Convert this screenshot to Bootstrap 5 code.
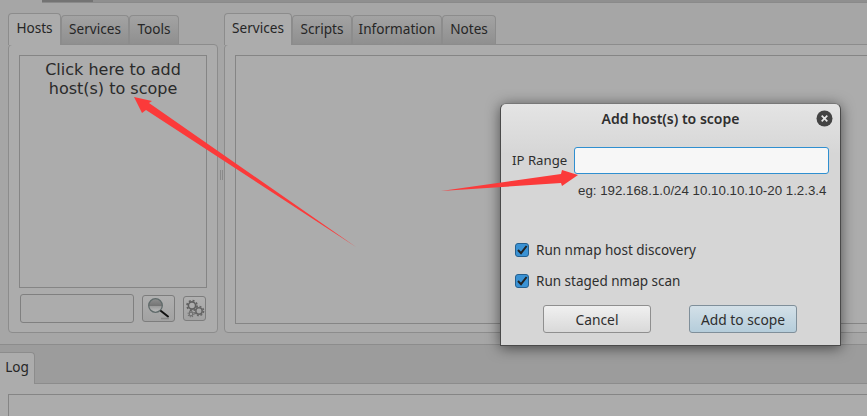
<!DOCTYPE html>
<html lang="en">
<head>
<meta charset="utf-8">
<title>Add host(s) to scope</title>
<link href="https://cdn.jsdelivr.net/npm/bootstrap@5.3.0/dist/css/bootstrap.min.css" rel="stylesheet">
<style>
html,body{height:416px;overflow:hidden}
body{background:#a6a6a6;font-family:"Noto Sans",sans-serif;font-size:13.5px;color:#262626;position:relative;width:867px}
.topstrip{height:3px;background:#8f8f8f;border-bottom:1px solid #8a8a8a;margin-left:42px}
.topstrip-a{width:51px;height:2px;background:#737373}
.workarea{height:341px;padding:10px 0 0 8px}
.leftpane{width:210px;flex:none}
.gripzone{width:6px;flex:none;color:#7d7d7d}
.griplines{width:3px;height:10px;border-left:1px solid #8a8a8a;border-right:1px solid #8a8a8a;margin:157px 0 0 0}
.rightpane{flex:1 1 auto;margin-right:-20px;min-width:0}
.qt-tabs{height:31px;border:0;flex-wrap:nowrap;align-items:flex-end;margin-left:0;position:relative;z-index:1}
.qt-tabs .nav-link{height:29px;padding:0;text-align:center;line-height:26px;font-size:13.6px;color:#262626;border:1px solid #8c8c8c;border-bottom:0;border-radius:4px 4px 0 0;background:linear-gradient(#a3a3a3,#8f8f8f);margin:0;white-space:nowrap}
.qt-tabs .nav-link.active{height:32px;line-height:28px;background:#acacac;color:#262626;border-color:#8c8c8c;margin-bottom:-1px;border-bottom:0}
.tabw-35{width:35px}.tabw-50{width:50px}.tabw-53{width:53px}.tabw-54{width:54px}.tabw-60{width:60px}.tabw-68{width:68px}.tabw-90{width:90px}
.qt-panel{height:289px;background:#acacac;border:1px solid #8c8c8c;border-radius:4px;padding:10px}
.qt-box{border:1px solid #858585;background:#acacac}
.hostbox{height:233px;font-family:"DejaVu Sans",sans-serif;font-size:16px;line-height:19px;text-align:center;padding-top:4px;color:#2a2a2a;margin-bottom:6px}
.svcbox{height:269px}
.filterinput.form-control{width:114px;height:29px;padding:0 6px;background:#acacac;border:1px solid #808080;border-radius:3px;margin-left:1px;box-shadow:none}
.toolbtn{padding:0;display:flex;align-items:center;justify-content:center;background:linear-gradient(#b0b0b0,#a2a2a2);border:1px solid #7d7d7d;border-radius:3px}
.toolbtn-search{width:33px;height:27px;margin-left:8px}
.toolbtn-gear{width:23px;height:25px;margin-left:8px}
.logarea{height:72px;background:#9c9c9c;border-top:1px solid #8c8c8c;padding-top:7px;overflow:hidden}
.logtabs .nav-link.active{border-left:0;border-radius:0 4px 0 0;color:#262626}
.logpanel{height:33px;overflow:hidden;background:#acacac;border-top:1px solid #8c8c8c;padding:10px 0 0 8px}
.logbox{height:40px;margin-right:-6px}
.add-dialog{position:absolute;left:500px;top:103px;width:341px;height:243px;background:linear-gradient(#e4e4e4,#d6d6d6 50px);border:1px solid #4a4a4a;border-top-color:#777;border-radius:6px 6px 1px 1px;box-shadow:0 2px 14px rgba(0,0,0,.55);color:#2e2e2e;z-index:5}
.dlg-head{height:29px;padding-top:1px;position:relative;font-weight:600;font-size:14px;line-height:28px;text-align:center;color:#2e2e2e}
.dlg-close{position:absolute;right:7px;top:6px;width:17px;height:17px;padding:0;border:0;background:none;display:block;line-height:0}
.dlg-range{height:27px;margin:14px 11px 0 11px}
.dlg-range label{width:62px;flex:none;font-size:13.2px;white-space:nowrap;padding-top:1px}
.dlg-range .form-control{height:27px;flex:1;min-width:0;padding:0 6px;background:#f7f7f7;border:1px solid #2f8fd0;border-radius:3px;box-shadow:none}
.dlg-hint{font-family:"Liberation Sans",sans-serif;font-size:13.3px;line-height:16px;margin:9px 0 0 77px;color:#333}
.dlg-check{min-height:0;margin:0;padding:0;height:18px;display:flex;align-items:center;gap:7px;margin-left:14px}
.dlg-checks{margin-top:42px;display:flex;flex-direction:column;gap:13px}
.dlg-check .form-check-input{float:none;margin:0;width:14px;height:14px;border:1px solid #25608f;border-radius:3px;flex:none;background-color:#3a92d4;background-size:14px 14px;background-image:url("data:image/svg+xml,%3Csvg xmlns='http://www.w3.org/2000/svg' viewBox='0 0 14 14'%3E%3Cpath d='M3 7l3 3.2L11.6 3' fill='none' stroke='%23222' stroke-width='2'/%3E%3C/svg%3E")}
.dlg-check label{color:#2e2e2e}
.dlg-actions{display:flex;margin:15px 0 0 42px;gap:38px}
.dlg-btn{width:108px;height:28px;padding:0;font-size:13.8px;line-height:25px;color:#2e2e2e;border:1px solid #8f8f8f;border-radius:3px;background:linear-gradient(#f0f0f0,#d9d9d9)}
.dlg-btn-default{background:linear-gradient(#d3e0e8,#b5cddb);border-color:#7f8f9a}
.arrow-layer{position:absolute;left:0;top:0;width:867px;height:416px;z-index:6;pointer-events:none}
</style>
</head>
<body>
<div class="topstrip"><div class="topstrip-a"></div></div>
<div class="workarea d-flex">
  <div class="leftpane">
    <ul class="nav nav-tabs qt-tabs">
      <li class="nav-item"><a class="nav-link active tabw-53" href="#">Hosts</a></li>
      <li class="nav-item"><a class="nav-link tabw-68" href="#">Services</a></li>
      <li class="nav-item"><a class="nav-link tabw-50" href="#">Tools</a></li>
    </ul>
    <div class="qt-panel">
      <div class="qt-box hostbox">Click here to add<br>host(s) to scope</div>
      <div class="d-flex align-items-center">
        <input class="form-control filterinput" type="text" aria-label="Filter">
        <button class="btn toolbtn toolbtn-search" type="button" aria-label="Search">
          <svg width="28" height="25" viewBox="0 0 28 25">
            <defs><linearGradient id="lens" x1="0" y1="0" x2="0" y2="1"><stop offset="0" stop-color="#8f8f8f"/><stop offset=".5" stop-color="#757575"/><stop offset=".55" stop-color="#9a9a9a"/><stop offset="1" stop-color="#bdbdbd"/></linearGradient></defs>
            <circle cx="10.5" cy="9.5" r="6.8" fill="url(#lens)" stroke="#5f6a6a" stroke-width="1.3"/>
            <path d="M16 15l7 5.5" stroke="#111" stroke-width="2" stroke-linecap="round"/>
            <path d="M16 22.5h8" stroke="#777" stroke-width="1.5" opacity=".6"/>
          </svg>
        </button>
        <button class="btn toolbtn toolbtn-gear" type="button" aria-label="Settings">
          <svg width="20" height="20" viewBox="0 0 20 20" fill="none">
            <circle cx="7" cy="6.5" r="3.6" stroke="#5f5f5f" stroke-width="1.6"/><circle cx="7" cy="6.5" r="5" stroke="#5f5f5f" stroke-width="1.6" stroke-dasharray="2 1.93"/>
            <circle cx="14" cy="12" r="3.2" stroke="#666" stroke-width="1.5"/><circle cx="14" cy="12" r="4.6" stroke="#666" stroke-width="1.5" stroke-dasharray="1.9 1.71"/>
            <circle cx="6" cy="15" r="1.8" stroke="#707070" stroke-width="1.2"/><circle cx="6" cy="15" r="2.9" stroke="#707070" stroke-width="1.1" stroke-dasharray="1.2 1.08"/>
          </svg>
        </button>
      </div>
    </div>
  </div>
  <div class="gripzone"><div class="griplines ms-auto me-auto"></div></div>
  <div class="rightpane">
    <ul class="nav nav-tabs qt-tabs">
      <li class="nav-item"><a class="nav-link active tabw-68" href="#">Services</a></li>
      <li class="nav-item"><a class="nav-link tabw-60" href="#">Scripts</a></li>
      <li class="nav-item"><a class="nav-link tabw-90" href="#">Information</a></li>
      <li class="nav-item"><a class="nav-link tabw-54" href="#">Notes</a></li>
    </ul>
    <div class="qt-panel"><div class="qt-box svcbox"></div></div>
  </div>
</div>
<div class="logarea">
  <ul class="nav nav-tabs qt-tabs logtabs">
    <li class="nav-item"><a class="nav-link active tabw-35" href="#">Log</a></li>
  </ul>
  <div class="logpanel"><div class="qt-box logbox"></div></div>
</div>

<div class="add-dialog" role="dialog" aria-label="Add host(s) to scope">
  <div class="dlg-head">Add host(s) to scope
    <button class="dlg-close" type="button" aria-label="Close">
      <svg width="17" height="17" viewBox="0 0 17 17"><circle cx="8.5" cy="8.5" r="8" fill="#444"/><path d="M5.7 5.7l5.6 5.6M11.3 5.7l-5.6 5.6" stroke="#e8e8e8" stroke-width="1.7"/></svg>
    </button>
  </div>
  <div class="dlg-range d-flex align-items-center">
    <label for="iprange">IP Range</label>
    <input class="form-control" id="iprange" type="text">
  </div>
  <div class="dlg-hint">eg: 192.168.1.0/24 10.10.10.10-20 1.2.3.4</div>
  <div class="dlg-checks">
    <div class="form-check dlg-check"><input class="form-check-input" type="checkbox" id="c1" checked><label for="c1">Run nmap host discovery</label></div>
    <div class="form-check dlg-check"><input class="form-check-input" type="checkbox" id="c2" checked><label for="c2">Run staged nmap scan</label></div>
  </div>
  <div class="dlg-actions">
    <button class="btn dlg-btn" type="button">Cancel</button>
    <button class="btn dlg-btn dlg-btn-default" type="button">Add to scope</button>
  </div>
</div>

<svg class="arrow-layer" viewBox="0 0 867 416" aria-hidden="true">
  <polygon fill="#fb3a3a" points="134,97 152,101 149,103 356,247 146,110 142,113"/>
  <polygon fill="#fb3a3a" points="578,175 562,170 561,174 441,191 561,183 562,186"/>
</svg>
</body>
</html>
